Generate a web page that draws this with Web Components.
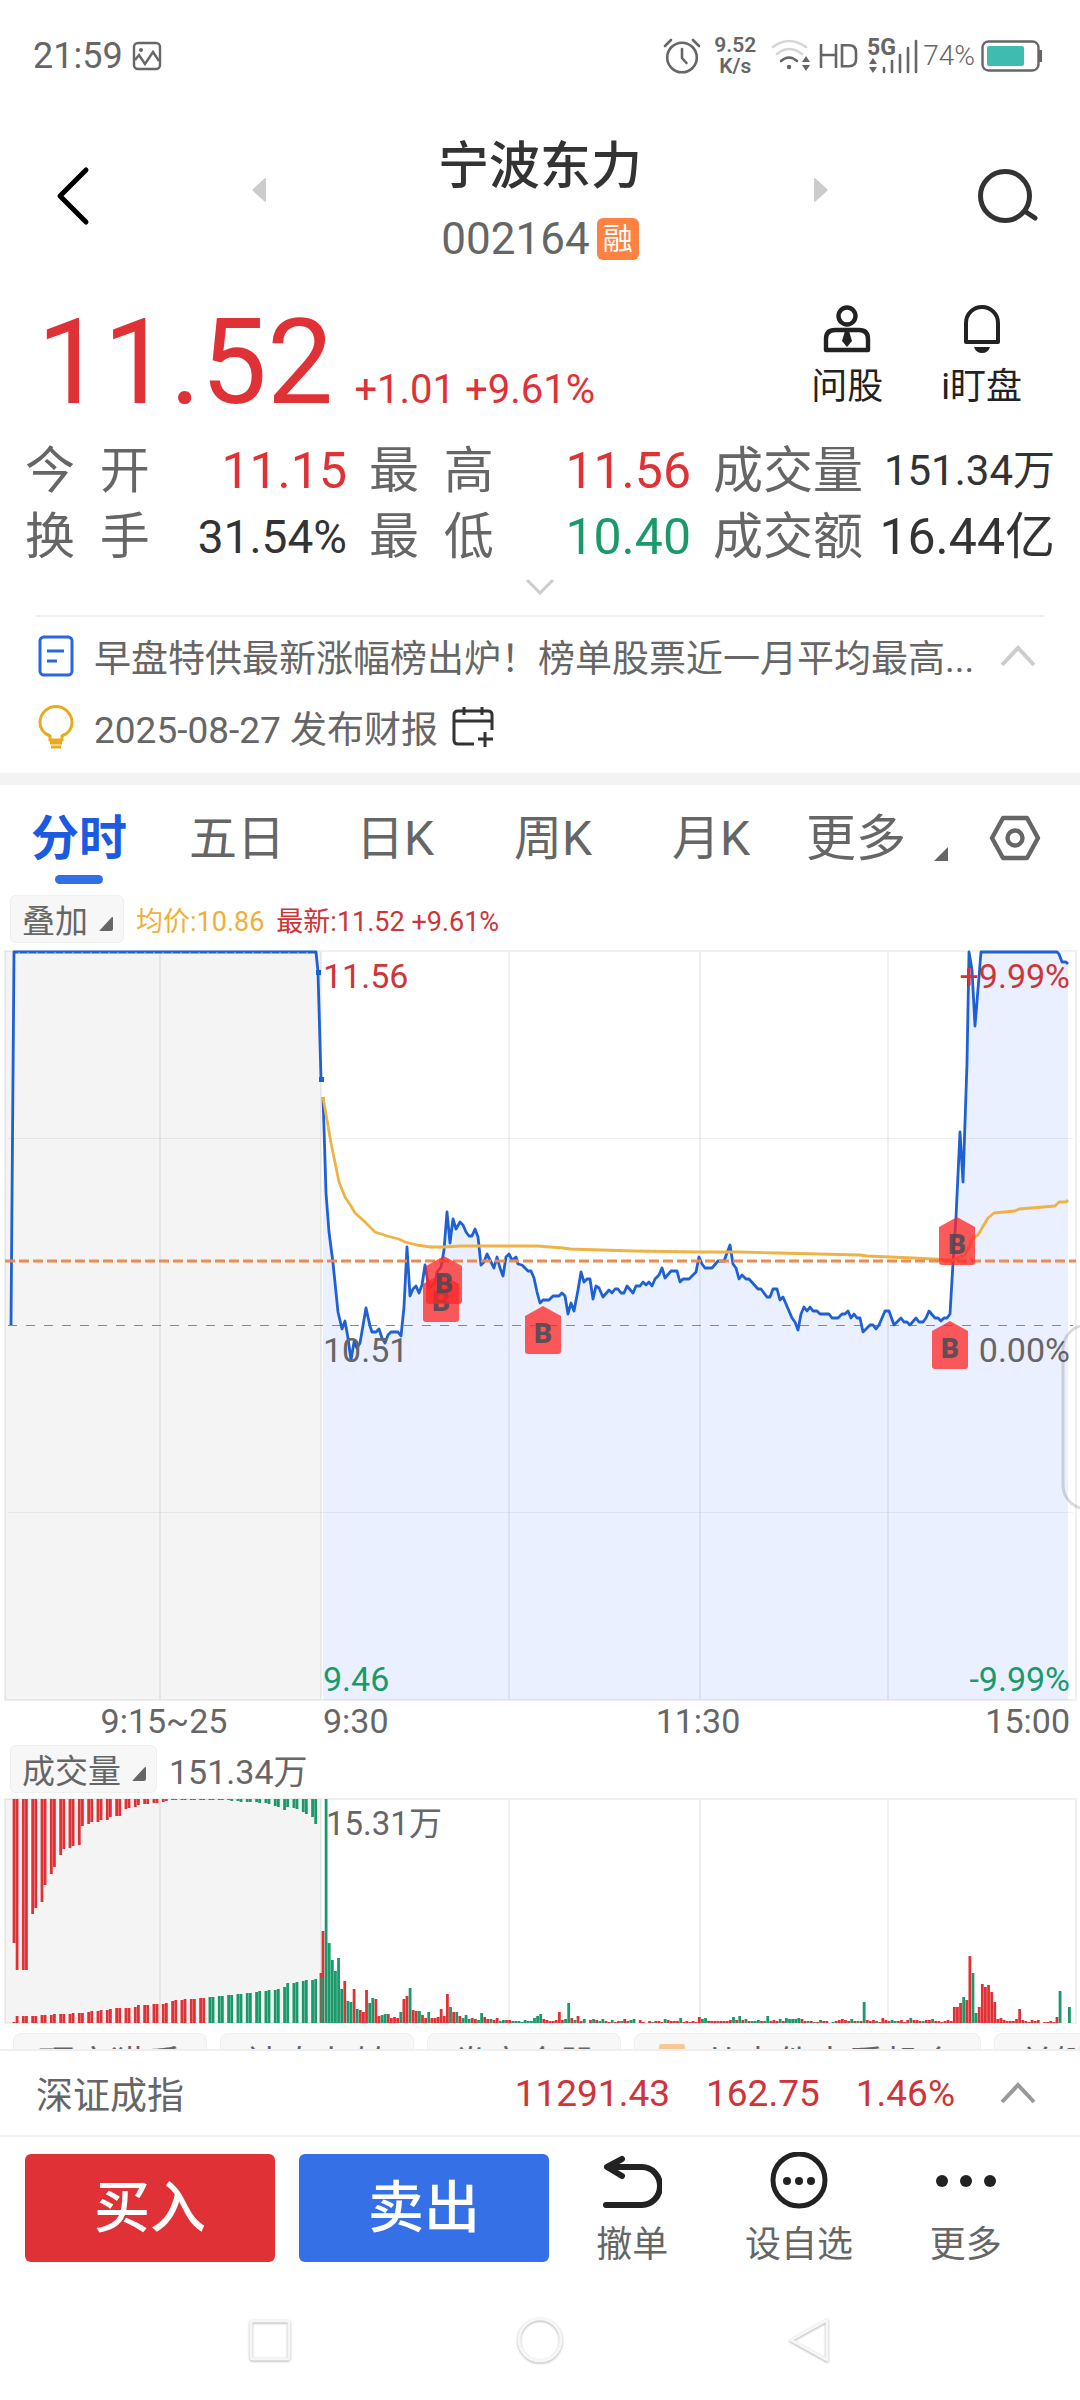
<!DOCTYPE html>
<html lang="zh-CN">
<head>
<meta charset="utf-8">
<meta name="viewport" content="width=device-width, initial-scale=1">
<title>宁波东力 002164</title>
<style>
  body {
    margin: 0;
    background: #fff;
    color: #666;
    font-family: Roboto, "Noto Sans CJK SC", sans-serif;
    --up: #e03236;
    --down: #1a9a6a;
    --ink: #333;
    --blue: #1b5be0;
    --line: #efefef;
    --chip: #f7f7f7;
  }
</style>
</head>
<body>
<stock-page>
  <status-bar></status-bar>
  <stock-header name="宁波东力" code="002164"></stock-header>
  <quote-panel price="11.52" change="+1.01 +9.61%">
    <quote-stat label="今&nbsp;&nbsp;开" tone="up">11.15</quote-stat>
    <quote-stat label="最&nbsp;&nbsp;高" tone="up">11.56</quote-stat>
    <quote-stat label="成交量" size="small">151.34万</quote-stat>
    <quote-stat label="换&nbsp;&nbsp;手" size="medium">31.54%</quote-stat>
    <quote-stat label="最&nbsp;&nbsp;低" tone="down">10.40</quote-stat>
    <quote-stat label="成交额">16.44亿</quote-stat>
  </quote-panel>
  <notice-list></notice-list>
  <period-tabs></period-tabs>
  <chart-legend label="叠加">
    <span style="color:#eeb03a">均价:10.86</span>
    <span style="color:#cf3438">最新:11.52 +9.61%</span>
  </chart-legend>
  <price-chart></price-chart>
  <chart-legend label="成交量" large><span>151.34万</span></chart-legend>
  <volume-chart></volume-chart>
  <tool-chips></tool-chips>
  <index-bar name="深证成指">
    <span>11291.43</span><span>162.75</span><span>1.46%</span>
  </index-bar>
  <trade-bar></trade-bar>
  <nav-bar></nav-bar>
</stock-page>

<script>
const BASE = `
  *, :host { box-sizing: border-box; }
  :host { display: block; }
  button {
    margin: 0;
    padding: 0;
    border: 0;
    background: none;
    color: inherit;
    font: inherit;
    cursor: pointer;
  }
  svg { display: block; flex: none; }
`;

class BaseElement extends HTMLElement {
  constructor() {
    super();
    this.shadowDOM = this.attachShadow({ mode: "open" });
  }
  connectedCallback() {
    this.shadowDOM.innerHTML = `<style>${BASE}${this.styles()}</style>${this.render()}`;
  }
  styles() { return ""; }
  render() { return "<slot></slot>"; }
}

class StockPage extends BaseElement {
  styles() {
    return `
    :host { display: flex; flex-direction: column; overflow: hidden; }
    `;
  }
}
customElements.define("stock-page", StockPage);

class StatusBar extends BaseElement {
  styles() {
    return `
    :host {
      display: flex;
      align-items: center;
      height: 112px;
      padding: 0 38px 0 33px;
      font-size: 36px;
      line-height: 40px;
    }
    .gap { flex: 1; }
    .time { margin-right: 9px; }
    .rate {
      margin: 0 13px 0 11px;
      width: 46px;
      font-size: 21px;
      font-weight: 600;
      line-height: 21px;
      text-align: center;
    }
    .hd { margin: 0 7px 0 8px; }
    .pct { margin: 0 6px 0 5px; font-size: 28px; font-weight: 300; }
    `;
  }
  render() {
    return `
    <span class="time">21:59</span>
    <svg width="30" height="30" viewBox="0 0 30 30" fill="none" stroke="#666" stroke-width="2.400">
      <rect x="2" y="2" width="26" height="26" rx="4"/>
      <path d="M3 19l4-5 6 9 8-12 6 9"/><circle cx="9" cy="9" r="2" fill="#666" stroke="none"/>
    </svg>
    <span class="gap"></span>
    <svg width="38" height="36" viewBox="0 0 38 36" fill="none" stroke="#666" stroke-width="2.600" stroke-linecap="round">
      <circle cx="19" cy="19.500" r="14.800"/><path d="M19 11v9l4.500 5M2 8l6-6M30 2l6 6"/>
    </svg>
    <div class="rate">9.52<br>K/s</div>
    <svg width="40" height="34" viewBox="0 0 40 34" fill="none" stroke-width="2.600" stroke-linecap="round">
      <path d="M2 8Q18 -4 35 8M6 15Q18 5 31 15" stroke="#d6d6d6"/>
      <path d="M10 22Q18 15 26 22" stroke="#666"/>
      <circle cx="18" cy="28" r="2.200" fill="#666"/>
      <path d="M35 17l4 6h-8zM35 32l4-6h-8z" fill="#666"/>
    </svg>
    <svg class="hd" width="40" height="30" viewBox="0 0 40 30" fill="none" stroke="#666" stroke-width="2.600">
      <path d="M2 3v24M17 3v24M2 14h15M23 4.300h7q7 0 7 7v7q0 7-7 7h-7z"/>
    </svg>
    <svg width="52" height="46" viewBox="-2 -5 52 46" fill="#666">
      <text x="-1" y="17" font-size="23" font-weight="700" font-family="Roboto">5G</text>
      <path d="M5 20l4 6H1zM5 35l4-6H1z"/>
      <path d="M16 34v-4M24 34V23M32 34V17M40 34V10M48 34V3" stroke="#666" stroke-width="2.600" stroke-linecap="round"/>
    </svg>
    <span class="pct">74%</span>
    <svg width="61" height="32" viewBox="0 0 61 32">
      <rect x="1.500" y="1.500" width="56" height="29" rx="6" fill="none" stroke="#666" stroke-width="2.400"/>
      <rect x="6" y="6" width="37" height="20" rx="2" fill="#40bbb0"/>
      <path d="M58 10h3v12h-3z" fill="#666"/>
    </svg>`;
  }
}
customElements.define("status-bar", StatusBar);

class StockHeader extends BaseElement {
  styles() {
    return `
    :host {
      display: grid;
      grid-template-columns: 197fr 577fr 211fr;
      padding: 25px 41px 0 55px;
      height: 150px;
    }
    button { display: flex; align-items: center; height: 117px; }
    .search { justify-self: end; }
    .name { display: flex; justify-content: space-between; }
    .name button { height: 105px; }
    .title { text-align: center; }
    h1 { margin: 0; color: var(--ink); font-size: 51px; font-weight: 500; line-height: 60px; }
    .code {
      display: flex;
      align-items: center;
      justify-content: center;
      gap: 7px;
      margin-top: 18px;
      font-size: 44px;
      line-height: 48px;
    }
    .badge {
      width: 42px;
      border-radius: 6px;
      background: #ff8243;
      color: #fff;
      font-size: 30px;
      line-height: 42px;
    }
    `;
  }
  render() {
    return `
    <button aria-label="返回"><svg width="36" height="60" viewBox="0 0 36 60" fill="none" stroke="#000" stroke-width="5" stroke-linecap="round" stroke-linejoin="round"><path d="M31 4L5 30l26 26"/></svg></button>
    <div class="name">
      <button aria-label="上一只"><svg width="14" height="24" viewBox="0 0 14 24" fill="#ccc"><path d="M14 1v22q0 2-2 0L1 13q-1-1 0-2L12 1q2-2 2 0z"/></svg></button>
      <div class="title">
        <h1>${this.getAttribute("name")}</h1>
        <div class="code">${this.getAttribute("code")}<span class="badge">融</span></div>
      </div>
      <button aria-label="下一只"><svg width="14" height="24" viewBox="0 0 14 24" fill="#ccc"><path d="M0 1v22q0 2 2 0l11-10q1-1 0-2L2 1Q0-1 0 1z"/></svg></button>
    </div>
    <button class="search" aria-label="搜索"><svg width="62" height="56" viewBox="0 0 62 56" fill="none" stroke="#333" stroke-width="5" stroke-linecap="round"><circle cx="28" cy="28" r="24.500"/><path d="M49 44l9 6"/></svg></button>`;
  }
}
customElements.define("stock-header", StockHeader);

class QuoteStat extends BaseElement {
  styles() {
    return `
    :host {
      display: flex;
      justify-content: space-between;
      align-items: center;
      color: var(--ink);
      font-size: 50px;
      line-height: 66px;
      white-space: nowrap;
    }
    :host([tone="up"]) { color: var(--up); }
    :host([tone="down"]) { color: var(--down); }
    :host([size="medium"]) { font-size: 46px; }
    :host([size="small"]) { font-size: 42px; }
    .label { color: #666; font-size: 50px; }
    `;
  }
  render() {
    return `<span class="label">${this.getAttribute("label")}</span><span><slot></slot></span>`;
  }
}
customElements.define("quote-stat", QuoteStat);

class QuotePanel extends BaseElement {
  styles() {
    return `
    .top { display: flex; align-items: flex-start; padding: 41px 58px 0 37px; height: 176px; }
    .price {
      flex: 1;
      color: var(--up);
      font-size: 118px;
      line-height: 120px;
      white-space: nowrap;
    }
    .price small { margin-left: 21px; font-size: 40px; }
    .acts { display: flex; gap: 58px; padding-top: 2px; color: #222; font-size: 36px; line-height: 44px; }
    .acts button { display: flex; flex-direction: column; align-items: center; gap: 12px; }
    .stats {
      display: grid;
      grid-template-columns: 322fr 322fr 342fr;
      column-gap: 22px;
      padding: 0 25px;
    }
    .more { display: flex; justify-content: center; width: 100%; padding: 8px 0 20px; }
    `;
  }
  render() {
    return `
    <div class="top">
      <div class="price">${this.getAttribute("price")}<small>${this.getAttribute("change")}</small></div>
      <div class="acts">
        <button>
          <svg width="48" height="48" viewBox="0 0 48 48" fill="none" stroke="#222" stroke-width="4.400">
            <circle cx="24" cy="11" r="8.500"/>
            <path d="M3 45V34q0-9 9-9h24q9 0 9 9v11z" stroke-linejoin="round"/>
            <path d="M22 26h4l3 10-5 6-5-6z" fill="#222" stroke="none"/>
          </svg>问股
        </button>
        <button>
          <svg width="40" height="48" viewBox="0 0 40 48" fill="none" stroke="#222" stroke-width="4">
            <path d="M4 37V18a16 16 0 0 1 32 0v19z" stroke-linejoin="round"/>
            <path d="M12 42h16q-2 6-8 6t-8-6z" fill="#222" stroke="none"/>
          </svg>i盯盘
        </button>
      </div>
    </div>
    <div class="stats"><slot></slot></div>
    <button class="more" aria-label="展开"><svg width="28" height="17" viewBox="0 0 28 17" fill="none" stroke="#ccc" stroke-width="3"><path d="M1 2l13 13L27 2"/></svg></button>`;
  }
}
customElements.define("quote-panel", QuotePanel);

class NoticeList extends BaseElement {
  styles() {
    return `
    :host { border-bottom: 12px solid #f3f3f3; padding: 0 36px 14px; font-size: 37px; }
    .row { display: flex; align-items: center; height: 64px; white-space: nowrap; }
    .news { height: 80px; border-top: 2px solid var(--line); }
    .row > svg { margin: 0 20px 0 2px; }
    a { color: inherit; text-decoration: none; }
    .text { flex: 1; }
    .fold { margin-right: 8px; }
    .cal { margin-left: 14px; }
    `;
  }
  render() {
    return `
    <div class="row news">
      <svg width="36" height="42" viewBox="0 0 36 42" fill="none" stroke="#2a66df" stroke-width="3"><rect x="2" y="2" width="32" height="38" rx="4"/><path d="M9 16h17M9 26h10"/></svg>
      <a class="text" href="#">早盘特供最新涨幅榜出炉！榜单股票近一月平均最高...</a>
      <button class="fold" aria-label="收起"><svg width="36" height="22" viewBox="0 0 36 22" fill="none" stroke="#ccc" stroke-width="4"><path d="M2 20L18 3l16 17"/></svg></button>
    </div>
    <div class="row">
      <svg width="36" height="44" viewBox="0 0 36 44" fill="none" stroke="#eba91f" stroke-width="3"><path d="M12 35v-4Q2 27 2 17.500a16 16 0 0 1 32 0Q34 27 24 31v4zM12 38h12M13 42h10"/></svg>
      <a href="#">2025-08-27 发布财报</a>
      <button class="cal" aria-label="添加日历"><svg width="42" height="42" viewBox="0 0 42 42" fill="none" stroke="#333" stroke-width="3"><path d="M22 38H6q-4 0-4-4V9q0-4 4-4h30q4 0 4 4v15M2 15h38M12 1v8M30 1v8M33 26v15M26 33h15"/></svg></button>
    </div>`;
  }
}
customElements.define("notice-list", NoticeList);

class PeriodTabs extends BaseElement {
  styles() {
    return `
    :host { display: flex; height: 108px; font-size: 48px; line-height: 56px; }
    button {
      display: flex;
      flex: 158 1 0;
      flex-direction: column;
      align-items: center;
      padding-top: 26px;
      white-space: nowrap;
    }
    .on { color: var(--blue); font-weight: 700; }
    .on::after {
      content: "";
      width: 48px;
      height: 9px;
      margin-top: 8px;
      border-radius: 5px;
      background: #326fe6;
    }
    .more { flex: 144 1 0; flex-direction: row; align-items: flex-start; gap: 28px; padding-left: 16px; font-size: 50px; }
    .more svg { margin-top: 36px; }
    .set { flex: 130 1 0; padding-top: 30px; }
    `;
  }
  render() {
    const tabs = ["分时", "五日", "日K", "周K", "月K"];
    return `
    ${tabs.map((t, i) => `<button class="${i ? "" : "on"}">${t}</button>`).join("")}
    <button class="more">更多<svg width="14" height="14" viewBox="0 0 14 14" fill="#666"><path d="M14 0v14H0z"/></svg></button>
    <button class="set" aria-label="设置"><svg width="52" height="46" viewBox="0 0 52 46" fill="none" stroke="#666" stroke-width="4.400" stroke-linejoin="round"><path d="M14 3h24l11 20-11 20H14L3 23z"/><circle cx="26" cy="23" r="7.500"/></svg></button>`;
  }
}
customElements.define("period-tabs", PeriodTabs);

class ChartLegend extends BaseElement {
  styles() {
    return `
    :host {
      display: flex;
      align-items: center;
      gap: 12px;
      height: 57px;
      padding: 0 10px 5px;
      font-size: 27px;
      white-space: nowrap;
    }
    :host([large]) { height: 53px; font-size: 34px; }
    button {
      display: flex;
      align-items: center;
      gap: 11px;
      height: 48px;
      padding: 0 10px 0 11px;
      border: 1px solid var(--line);
      border-radius: 6px;
      background: var(--chip);
      font-size: 33px;
    }
    svg { margin-top: 10px; }
    `;
  }
  render() {
    return `<button>${this.getAttribute("label")}<svg width="14" height="14" viewBox="0 0 14 14" fill="#666"><path d="M14 1v11q0 2-2 2H1q-1 0 0-1L12 1q2-2 2 0z"/></svg></button><slot></slot>`;
  }
}
customElements.define("chart-legend", ChartLegend);

// price line of the continuous session, chart units
const PRICE = `323,147 325,210 326,243 329,282 333,313 338,362 342,379 345,371 348,388 351,410 354,392
  357,398 360,393 366,358 370,376 372,382 376,382 379,379 382,388 385,393 388,385 391,382 398,382 401,386
  404,357 407,297 410,346 413,339 416,336 419,343 422,335 425,315 429,338 435,333 437,322 441,317 444,300
  447,262 450,293 453,269 456,279 460,272 463,275 466,282 469,286 472,286 475,279 478,287 481,315 484,312
  487,304 491,312 494,318 497,307 500,318 503,326 506,307 509,304 512,310 516,307 518,314 522,315 528,321
  531,321 534,328 537,342 540,353 543,350 549,350 553,346 559,346 562,343 565,346 568,364 571,353 574,361
  578,340 581,322 584,332 587,329 590,329 593,349 596,336 599,338 603,347 609,340 612,343 615,339 618,339
  621,343 624,343 627,336 633,343 636,336 640,336 643,332 646,335 649,332 652,336 655,329 659,325 662,318
  665,328 671,321 677,321 680,332 683,329 689,329 696,322 699,307 702,314 705,318 712,318 718,311 724,311
  730,295 733,314 736,318 739,329 742,325 746,329 749,329 758,339 761,339 767,347 770,347 773,339 777,339
  780,350 783,347 792,368 795,372 798,380 801,364 804,357 807,361 810,357 813,361 817,361 820,364 829,364
  832,368 838,368 842,364 845,364 848,361 851,368 854,364 857,368 860,368 863,382 870,375 873,375 876,379
  879,375 885,361 889,361 894,375 901,368 904,372 907,372 910,375 916,368 919,372 923,372 926,368 929,361
  935,368 938,368 941,371 944,368 947,368 950,364 953,313 956,267 960,182 963,232 967,113 969,2 972,20
  975,76 981,2 1057,2 1059,4 1062,12 1066,12 1068,14`;

const AVERAGE = `323,147 331,193 339,232 345,247 351,256 355,263 364,271 375,282 387,286 399,289 405,292
  417,295 430,297 444,297 461,296 537,296 563,298 570,299 633,301 699,302 740,302 777,303 860,305 867,306
  913,308 953,310 965,305 973,288 978,285 988,268 994,263 1015,261 1019,259 1055,256 1059,252 1066,252 1068,250`;

// buy points: left edge and top of each marker
const BUYS = [[423, 324], [426, 306], [525, 356], [939, 267], [932, 371]];

class PriceChart extends BaseElement {
  styles() {
    return `
    svg { width: 100%; height: auto; }
    text { font-family: Roboto, "Noto Sans CJK SC", sans-serif; font-size: 34px; fill: #666; }
    .grid { fill: none; stroke: #000; stroke-opacity: .06; stroke-width: 2; }
    .up { fill: #cf3438; }
    .down { fill: var(--down); }
    .end { text-anchor: end; }
    .mid { text-anchor: middle; }
    .buy path { fill: #ff2626; fill-opacity: .76; }
    .buy text { font-size: 28px; font-weight: 900; fill: #3a4a55; fill-opacity: .8; }
    `;
  }
  render() {
    return `
    <svg viewBox="0 0 1080 795" role="img" aria-label="分时走势">
      <rect x="5" y="1" width="316" height="749" fill="#f4f4f4"/>
      <polygon points="323,750 ${PRICE} 1068,750" fill="#eaf0ff"/>
      <path class="grid" d="M5 1h1071v749H5zM160 1v749M321 1v749M509 1v749M700 1v749M888 1v749"/>
      <path class="grid" style="stroke-width:1" d="M8 188.500h1065M8 562.500h1065"/>
      <path d="M8 375.500h1065" stroke="#888" stroke-dasharray="9 9"/>
      <g fill="none" stroke="#1f60d2" stroke-width="2.800" stroke-linejoin="round">
        <path d="M11 375L14 2h302l2 20 3 107"/>
        <path d="M18 3h296" stroke="#9cc4ff" stroke-width="1" stroke-dasharray="2 7"/>
        <polyline points="${PRICE}"/>
        <polyline points="${AVERAGE}" stroke="#efb244"/>
      </g>
      <path d="M316 20h5v5h-5zM319 127h5v5h-5z" fill="#1f60d2"/>
      <path d="M5 311h1071" stroke="#ed8a50" stroke-width="3" stroke-dasharray="10 4"/>
      ${BUYS.map(([x, y]) => `<g class="buy" transform="translate(${x} ${y})"><path d="M18 0L36 10v35q0 3-3 3H3q-3 0-3-3V10z"/><text class="mid" x="18" y="37">B</text></g>`).join("")}
      <text class="up" x="323" y="38">11.56</text>
      <text x="323" y="412">10.51</text>
      <text class="down" x="323" y="741">9.46</text>
      <text class="up end" x="1070" y="38">+9.99%</text>
      <text class="end" x="1070" y="412">0.00%</text>
      <text class="down end" x="1070" y="741">-9.99%</text>
      <rect x="1063" y="375" width="60" height="184" rx="24" fill="none" stroke="#000" stroke-opacity=".14" stroke-width="3"/>
      <text class="mid" x="164" y="783">9:15~25</text>
      <text x="323" y="783">9:30</text>
      <text class="mid" x="698" y="783">11:30</text>
      <text class="end" x="1070" y="783">15:00</text>
    </svg>`;
  }
}
customElements.define("price-chart", PriceChart);

// auction bars come in pairs, every third slot stays empty
const UNMATCHED = [144,171,171,171,115,109,103,86,75,68,56,50,49,47,46,27,25,23,23,21,21,18,17,17,10,9,8,6,5,5,4,4,3,2,
  1,1,1,1,1,1,1,1,1,1,1,1,1,2,2,3,3,3,3,4,4,5,7,8,11,8,9,10,13,15,18,25];
const MATCHED = [1,7,7,7,7,7,8,8,8,9,9,9,9,10,10,10,11,12,12,13,13,14,15,15,15,15,16,18,18,18,19,19,19,20,22,23,23,24,
  24,24,25,25,26,26,27,27,28,28,29,29,30,30,31,32,32,33,33,34,36,40,40,41,42,43,43,44,46];
// one bar a minute: r rises, g falls
const MINUTES = `r92 g224 g80 g63 g52 g65 g34 r42 g22 g21 r34 g14 r13 r11 r33 g20 g25 r24 r7 g8 g9 r9 r5 r6 r5 g11 r24
  r27 g35 r13 r12 g12 r8 r5 g11 r5 r5 r6 r14 r7 r29 g16 r11 g11 r7 g5 g8 g4 r5 r4 g3 g10 r6 r4 g4 r3 r5 g2 g3 r3 r3 g2 g2
  g2 g1 g3 g2 g2 g5 g7 g9 r4 r3 r2 r2 r3 r11 r3 g4 g20 r5 g3 r7 r2 g4 r0 r3 g4 r3 g2 g4 r2 r1 g3 r1 r2 g2 r4 r2 g3 g4 r0
  r3 r1 r0 r2 g1 r2 r2 r1 g4 r3 r2 r2 r2 g5 r1 r2 r1 r2 r1 r6 g4 g5 r2 r2 r2 r2 r2 r2 r2 r3 g6 r3 g7 r3 g4 r2 g2 g2 g3 r2
  g2 g7 r2 r3 r2 g4 r2 g5 g4 g4 g4 g5 r4 r2 g2 r2 g1 r1 g3 r2 r2 r0 g1 r2 r3 r4 r3 r2 g4 r2 g2 r2 g21 r3 r2 r3 g2 r1 r5
  r3 r2 g3 g2 r2 r3 r1 r3 g5 r3 r3 r2 g2 r3 r3 g4 r2 r2 r1 r2 r3 r2 r16 r16 r20 g26 r23 r67 g50 g10 r16 r39 r36 r38 r31
  r21 r4 r5 r3 r2 r2 r2 r4 r14 r3 r2 r1 r3 r2 r3 r0 r1 r1 r2 r1 r6 g32 r0 r0 g16`.split(/\s+/);

class VolumeChart extends BaseElement {
  styles() {
    return `
    svg { width: 100%; height: auto; }
    text { font-family: Roboto, "Noto Sans CJK SC", sans-serif; font-size: 33px; fill: #666; }
    .grid { fill: none; stroke: #000; stroke-opacity: .06; stroke-width: 2; }
    .r { stroke: var(--up); }
    .g { stroke: var(--down); }
    `;
  }
  render() {
    const step = 3.11;
    const paths = { r: "", g: "" };
    const slot = (i) => 14 + (i + Math.floor(i / 2)) * step;
    UNMATCHED.forEach((h, i) => { paths[i < 42 ? "r" : "g"] += `M${slot(i)} 1v${h}`; });
    MATCHED.forEach((h, i) => { paths[i < 42 ? "r" : "g"] += `M${slot(i)} 225v${-h}`; });
    paths.r += "M321 225v-50";
    MINUTES.forEach((m, i) => { paths[m[0]] += `M${323 + i * step} 225v${-m.slice(1)}`; });
    return `
    <svg viewBox="0 0 1080 227" role="img" aria-label="成交量">
      <rect x="5" y="1" width="316" height="224" fill="#f4f4f4"/>
      <path class="grid" d="M5 1h1071v224H5zM160 1v224M321 1v224M509 1v224M700 1v224M888 1v224"/>
      <path class="r" d="${paths.r}" stroke-width="2.800"/>
      <path class="g" d="${paths.g}" stroke-width="2.800"/>
      <text x="326" y="37">15.31万</text>
    </svg>`;
  }
}
customElements.define("volume-chart", VolumeChart);

class ToolChips extends BaseElement {
  styles() {
    return `
    :host { display: flex; gap: 13px; height: 24px; padding: 8px 0 0 13px; overflow: hidden; }
    button {
      display: flex;
      flex: none;
      align-items: center;
      gap: 19px;
      height: 56px;
      padding: 0 24px;
      border: 1px solid var(--line);
      border-radius: 8px;
      background: var(--chip);
      font-size: 36px;
      white-space: nowrap;
    }
    i { width: 26px; height: 34px; border-radius: 2px; background: #f8c796; }
    `;
  }
  render() {
    return `<button>顶底猎手</button><button>神奇九转</button><button>券商金股</button><button><i></i>从事件中看机会</button><button>关键</button>`;
  }
}
customElements.define("tool-chips", ToolChips);

class IndexBar extends BaseElement {
  styles() {
    return `
    :host {
      display: flex;
      align-items: center;
      gap: 36px;
      height: 88px;
      padding: 0 44px 0 36px;
      border: solid var(--line);
      border-width: 2px 0;
      background: #fff;
      color: #cf3438;
      font-size: 37px;
    }
    .name { flex: 1; color: #666; }
    button { margin-left: 9px; }
    `;
  }
  render() {
    return `<span class="name">${this.getAttribute("name")}</span><slot></slot>
    <button aria-label="展开指数"><svg width="36" height="22" viewBox="0 0 36 22" fill="none" stroke="#999" stroke-width="4"><path d="M2 20L18 3l16 17"/></svg></button>`;
  }
}
customElements.define("index-bar", IndexBar);

class TradeBar extends BaseElement {
  styles() {
    return `
    :host { display: flex; padding: 17px 31px 0 25px; font-size: 36px; line-height: 44px; }
    button { flex: 2 1 0; display: flex; flex-direction: column; align-items: center; gap: 13px; }
    .buy, .sell {
      flex: 3 1 0;
      justify-content: center;
      height: 108px;
      border-radius: 6px;
      color: #fff;
      font-size: 56px;
      font-weight: 500;
    }
    .buy { margin-right: 24px; background: var(--up); }
    .sell { background: #3570e6; }
    `;
  }
  render() {
    return `
    <button class="buy">买入</button>
    <button class="sell">卖出</button>
    <button>
      <svg width="60" height="56" viewBox="0 0 60 56" fill="none" stroke="#222" stroke-width="6" stroke-linecap="round" stroke-linejoin="round"><path d="M20 5L5 13l15 9M6 13h34a18 19 0 0 1 0 38H4"/></svg>撤单
    </button>
    <button>
      <svg width="60" height="60" viewBox="0 0 60 60" fill="#222" style="margin:-2px 0"><circle cx="30" cy="28" r="26" fill="none" stroke="#222" stroke-width="5"/><circle cx="18" cy="29" r="4"/><circle cx="30" cy="29" r="4"/><circle cx="42" cy="29" r="4"/></svg>设自选
    </button>
    <button>
      <svg width="60" height="56" viewBox="0 0 60 56" fill="#222"><circle cx="6" cy="27" r="6"/><circle cx="30" cy="27" r="6"/><circle cx="54" cy="27" r="6"/></svg>更多
    </button>`;
  }
}
customElements.define("trade-bar", TradeBar);

class NavBar extends BaseElement {
  styles() {
    return `
    :host { display: flex; height: 132px; padding: 14px 12.5% 0; }
    button { flex: 1; display: flex; align-items: center; justify-content: center; }
    svg { filter: drop-shadow(0 1px 1px rgba(0, 0, 0, .3)); }
    `;
  }
  render() {
    const icon = (label, shape) => `<button aria-label="${label}"><svg width="46" height="46" viewBox="0 0 46 46" fill="none" stroke="#f6f6f6" stroke-width="3" stroke-linejoin="round">${shape}</svg></button>`;
    return icon("最近任务", `<rect x="4" y="4" width="38" height="38" rx="2"/>`) +
      icon("主页", `<circle cx="23" cy="23" r="21"/>`) +
      icon("返回", `<path d="M40 3v40L4 23z"/>`);
  }
}
customElements.define("nav-bar", NavBar);
</script>
</body>
</html>
